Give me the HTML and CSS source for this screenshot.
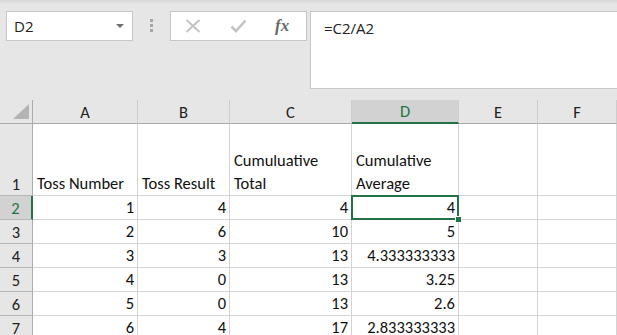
FILE: index.html
```html
<!DOCTYPE html>
<html lang="en">
<head>
    <meta charset="UTF-8">
    <meta name="viewport" content="width=device-width, initial-scale=1.0">
    <title>Cumulative Average</title>
    <link rel="stylesheet" href="styles.css">
</head>
<body>
    <div class="toolbar">
        <div class="name-box">
            <span>D2</span>
            <span class="caret"></span>
        </div>
        <div class="grip"><i></i><i></i><i></i></div>
        <div class="fx-buttons">
            <svg class="btn-icon" width="16" height="14" viewBox="0 0 16 14">
                <path d="M1.5 1 L14.5 13 M14.5 1 L1.5 13" stroke="#c3c3c3" stroke-width="2" fill="none"/>
            </svg>
            <svg class="btn-icon" width="17" height="14" viewBox="0 0 17 14">
                <path d="M1.5 7.5 L6 12 L15.5 1.5" stroke="#c3c3c3" stroke-width="2.6" fill="none"/>
            </svg>
            <span class="fx">fx</span>
        </div>
        <div class="formula">=C2/A2</div>
    </div>

    <div class="sheet">
        <!-- column headers -->
        <div class="corner"><span class="corner-mark"></span></div>
        <div class="col-head">A</div>
        <div class="col-head">B</div>
        <div class="col-head">C</div>
        <div class="col-head active">D</div>
        <div class="col-head">E</div>
        <div class="col-head">F</div>

        <!-- row 1 -->
        <div class="row-head">1</div>
        <div class="cell">Toss Number</div>
        <div class="cell">Toss Result</div>
        <div class="cell wrap">Cumuluative Total</div>
        <div class="cell wrap">Cumulative Average</div>
        <div class="cell"></div>
        <div class="cell"></div>

        <!-- row 2 -->
        <div class="row-head active">2</div>
        <div class="cell num">1</div>
        <div class="cell num">4</div>
        <div class="cell num">4</div>
        <div class="cell num selected">4<span class="fill-handle"></span></div>
        <div class="cell"></div>
        <div class="cell"></div>

        <div class="row-head">3</div>
        <div class="cell num">2</div>
        <div class="cell num">6</div>
        <div class="cell num">10</div>
        <div class="cell num">5</div>
        <div class="cell"></div>
        <div class="cell"></div>

        <div class="row-head">4</div>
        <div class="cell num">3</div>
        <div class="cell num">3</div>
        <div class="cell num">13</div>
        <div class="cell num">4.333333333</div>
        <div class="cell"></div>
        <div class="cell"></div>

        <div class="row-head">5</div>
        <div class="cell num">4</div>
        <div class="cell num">0</div>
        <div class="cell num">13</div>
        <div class="cell num">3.25</div>
        <div class="cell"></div>
        <div class="cell"></div>

        <div class="row-head">6</div>
        <div class="cell num">5</div>
        <div class="cell num">0</div>
        <div class="cell num">13</div>
        <div class="cell num">2.6</div>
        <div class="cell"></div>
        <div class="cell"></div>

        <div class="row-head">7</div>
        <div class="cell num">6</div>
        <div class="cell num">4</div>
        <div class="cell num">17</div>
        <div class="cell num">2.833333333</div>
        <div class="cell"></div>
        <div class="cell"></div>
    </div>
</body>
</html>
```

FILE: styles.css
```css
body {
    margin: 0;
    background: #e6e6e6;
    font-family: Carlito, Lato, "Liberation Sans", sans-serif;
    color: #111;
    overflow: hidden;
}

/* formula bar area */
.toolbar {
    display: flex;
    align-items: flex-start;
    height: 100px;
    box-sizing: border-box;
    padding: 11px 0 0 6px;
    background: linear-gradient(#d8d8d8, #e6e6e6 5px);
}

.name-box {
    width: 127px;
    height: 30px;
    box-sizing: border-box;
    border: 1px solid #c6c6c6;
    background: #fff;
    display: flex;
    align-items: center;
    justify-content: space-between;
    padding: 0 8px 0 7px;
    font-family: "Open Sans", sans-serif;
    font-size: 15px;
    color: #222;
}

.caret {
    width: 0;
    height: 0;
    border-left: 4px solid transparent;
    border-right: 4px solid transparent;
    border-top: 4px solid #707070;
}

.grip {
    display: flex;
    flex-direction: column;
    gap: 2px;
    margin: 8px 0 0 17px;
}

.grip i {
    display: block;
    width: 3px;
    height: 3px;
    background: #a6a6a6;
}

.fx-buttons {
    width: 137px;
    height: 30px;
    box-sizing: border-box;
    margin-left: 17px;
    border: 1px solid #c6c6c6;
    background: #fff;
    display: flex;
    align-items: center;
    padding-left: 14px;
    gap: 29px;
}

.fx {
    font-family: "Liberation Serif", serif;
    font-style: italic;
    font-weight: bold;
    font-size: 17px;
    color: #6a6a6a;
    margin-left: -1px;
}

.formula {
    flex: 1;
    height: 78px;
    box-sizing: border-box;
    margin: 0 -2px 0 3px;
    border: 1px solid #c6c6c6;
    background: #fff;
    padding: 6px 13px;
    font-family: "Open Sans", sans-serif;
    font-size: 15px;
    color: #222;
}

/* worksheet grid */
.sheet {
    display: grid;
    grid-template-columns: 33px 105px 92px 122px 107px 79px 1fr;
    grid-template-rows: 24px 72px repeat(6, 24px);
    background: #fff;
    font-size: 16.5px;
}

.corner {
    background: #e6e6e6;
    border-right: 1px solid #ababab;
    border-bottom: 1px solid #ababab;
    display: flex;
    align-items: flex-end;
    justify-content: flex-end;
    padding: 0 3px 4px 0;
}

.corner-mark {
    width: 16px;
    height: 15px;
    background: #b4b4b4;
    clip-path: polygon(100% 0, 100% 100%, 0 100%);
}

.col-head {
    background: #e6e6e6;
    border-right: 1px solid #cdcdcd;
    border-bottom: 1px solid #ababab;
    display: flex;
    align-items: center;
    justify-content: center;
    color: #222;
}

.col-head.active {
    background: #d2d2d2;
    color: #217346;
    border-bottom: 2px solid #217346;
}

.row-head {
    background: #e6e6e6;
    border-right: 1px solid #ababab;
    border-bottom: 1px solid #b8b8b8;
    display: flex;
    align-items: flex-end;
    justify-content: center;
    padding-bottom: 1px;
    color: #222;
}

.row-head.active {
    background: #d2d2d2;
    color: #217346;
    border-right: 2px solid #217346;
}

.cell {
    border-right: 1px solid #d4d4d4;
    border-bottom: 1px solid #d4d4d4;
    display: flex;
    align-items: flex-end;
    padding: 0 3px 0 4px;
    line-height: 23px;
    white-space: nowrap;
    overflow: hidden;
}

.cell.wrap {
    white-space: normal;
}

.cell.num {
    justify-content: flex-end;
}

.cell.selected {
    position: relative;
    overflow: visible;
    z-index: 2;
}

.cell.selected::after {
    content: "";
    position: absolute;
    top: -1px;
    left: -1px;
    right: -1px;
    bottom: -1px;
    border: 2px solid #217346;
}

.fill-handle {
    position: absolute;
    right: -4px;
    bottom: -4px;
    width: 5px;
    height: 5px;
    background: #217346;
    border: 1px solid #fff;
    z-index: 3;
}
```
